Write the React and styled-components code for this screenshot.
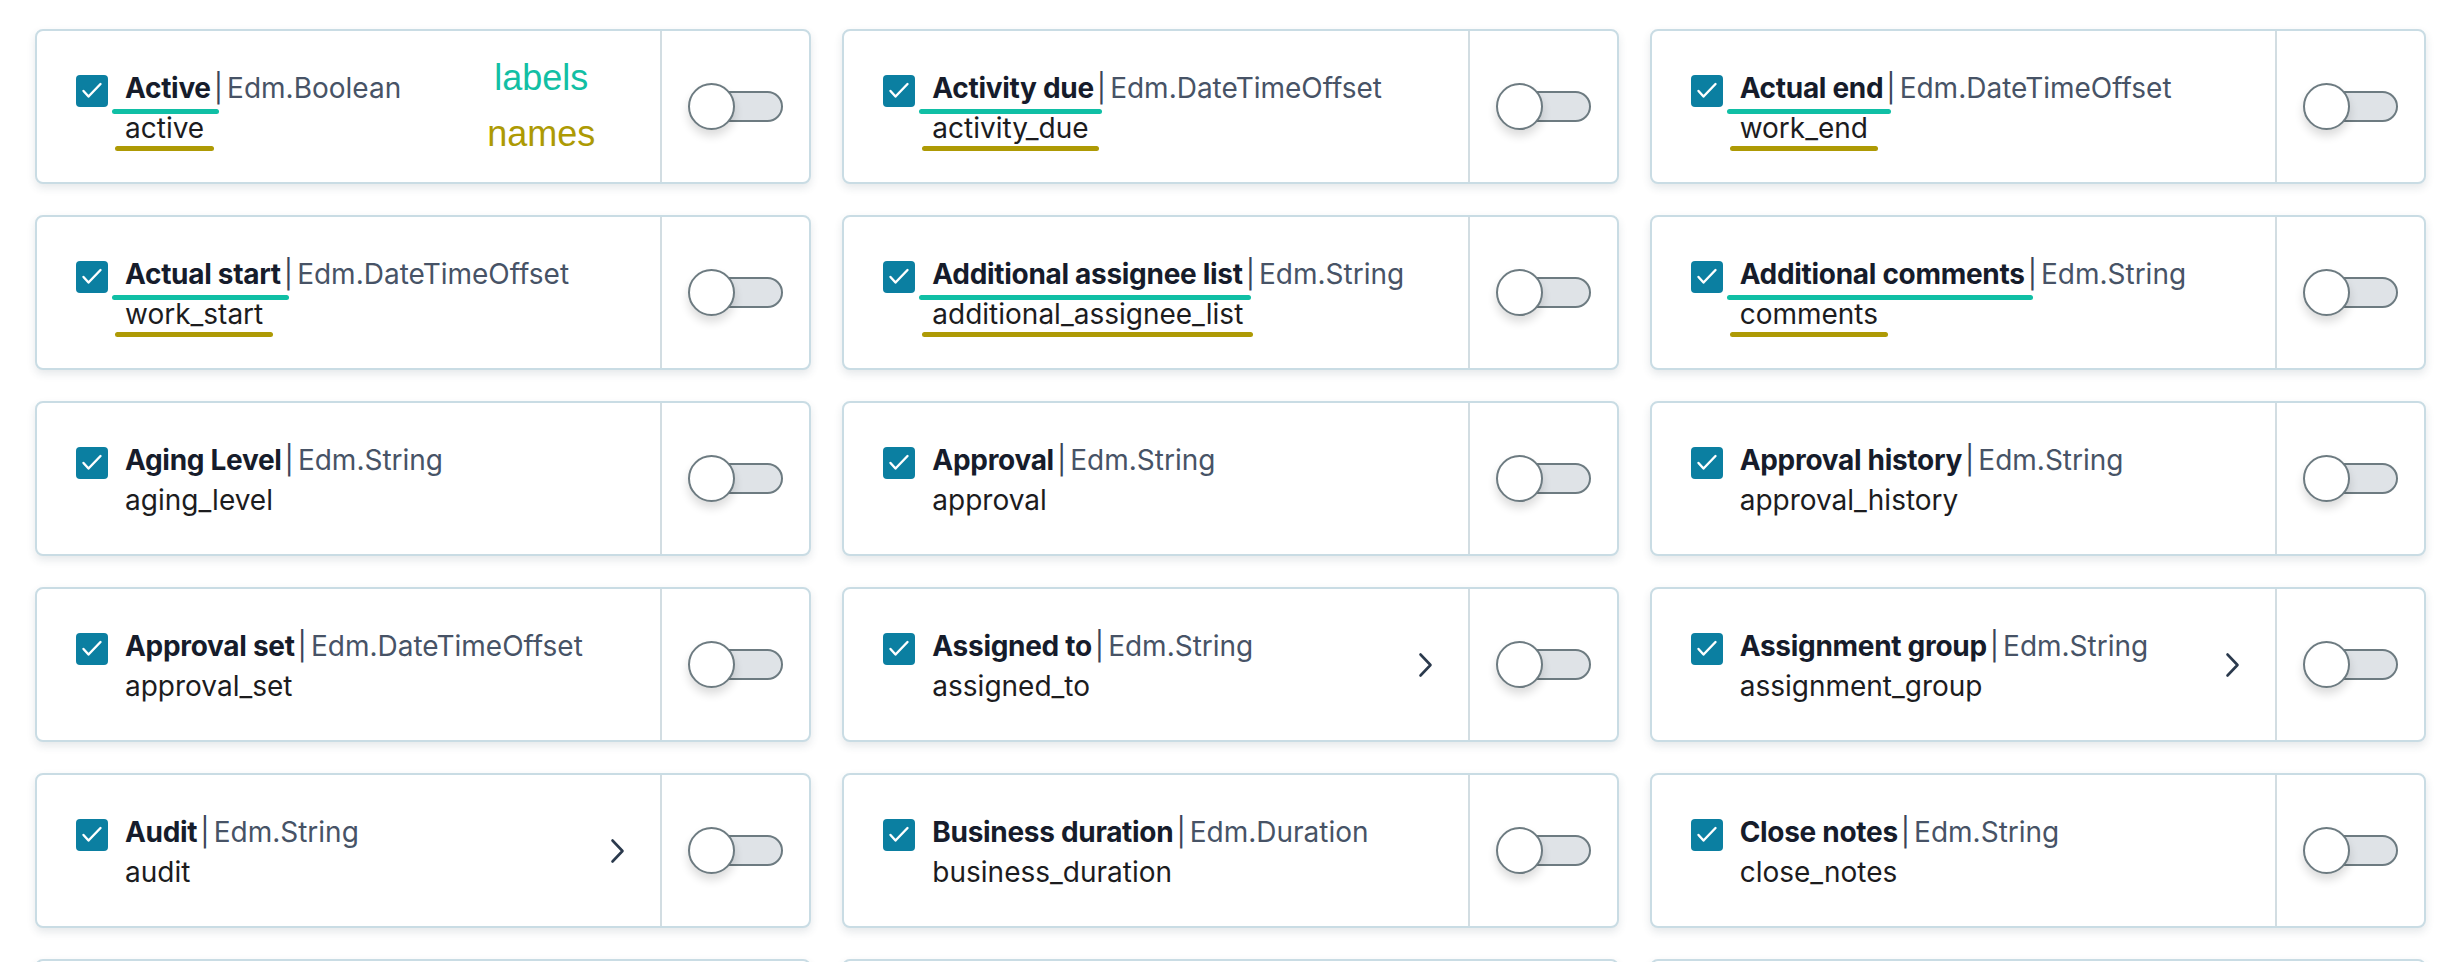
import React from 'react';
import styled, { createGlobalStyle } from 'styled-components';

const GlobalStyle = createGlobalStyle`
  html, body {
    margin: 0;
    padding: 0;
    background: #ffffff;
    overflow: hidden;
  }
  body {
    font-family: Inter, "Noto Sans", sans-serif;
  }
  * {
    box-sizing: border-box;
  }
`;

const Page = styled.div`
  padding: 29px 32px 0 35px;
  height: 962px;
  overflow: hidden;
`;

const Grid = styled.div`
  display: grid;
  grid-template-columns: repeat(3, 1fr);
  column-gap: 31px;
  row-gap: 31px;
`;

const Card = styled.div`
  height: 155px;
  display: flex;
  background: #ffffff;
  border: 2px solid #c9dce4;
  border-radius: 8px;
  box-shadow: 0 4px 8px rgba(40, 64, 84, 0.12);
`;

const Main = styled.div`
  flex: 1;
  min-width: 0;
  display: flex;
  align-items: center;
  padding: 0 35px 0 39px;
`;

const Check = styled.div`
  flex: none;
  width: 32px;
  height: 32px;
  border-radius: 4px;
  background: #0b7fa1;
  align-self: flex-start;
  margin-top: 44px;
  display: flex;
  align-items: center;
  justify-content: center;
`;

const Text = styled.div`
  margin-left: 17px;
  margin-top: 2px;
  font-size: 28px;
  line-height: 40px;
  white-space: nowrap;
`;

const LabelLine = styled.div`
  display: flex;
  align-items: baseline;
`;

const Label = styled.span`
  position: relative;
  font-weight: 700;
  color: #161c2b;
  letter-spacing: -0.3px;

  &::after {
    content: '';
    display: ${p => (p.$marked ? 'block' : 'none')};
    position: absolute;
    left: -13px;
    right: -8px;
    bottom: -6px;
    height: 5px;
    border-radius: 3px;
    background: #10bfa5;
  }
`;

const Pipe = styled.span`
  margin: 0 4px 0 3px;
  color: #3a4558;
`;

const Type = styled.span`
  color: #475366;
`;

const Name = styled.span`
  position: relative;
  display: inline-block;
  line-height: 40px;
  color: #1c1c1e;

  &::after {
    content: '';
    display: ${p => (p.$marked ? 'block' : 'none')};
    position: absolute;
    left: -10px;
    right: -10px;
    bottom: -3px;
    height: 5px;
    border-radius: 3px;
    background: #ae9a05;
  }
`;

const Notes = styled.div`
  margin-left: auto;
  margin-right: 24px;
  width: 120px;
  text-align: center;
  font-family: "Liberation Sans", Arial, sans-serif;
  font-size: 36px;
  line-height: 56px;
  margin-top: -1px;
`;

const Note = styled.div`
  color: ${p => p.$color};
`;

const Chevron = styled.svg`
  flex: none;
  margin-left: auto;
  width: 15px;
  height: 26px;
`;

const Side = styled.div`
  flex: none;
  width: 149px;
  border-left: 2px solid #d2dde2;
  display: flex;
  align-items: center;
  justify-content: center;
`;

const Toggle = styled.div`
  position: relative;
  width: 95px;
  height: 47px;
`;

const Track = styled.div`
  position: absolute;
  left: 12px;
  right: 0;
  top: 8px;
  height: 31px;
  border-radius: 16px;
  border: 2px solid #6d7b81;
  background: #dfe3e7;
`;

const Knob = styled.div`
  position: absolute;
  left: 0;
  top: 0;
  width: 47px;
  height: 47px;
  border-radius: 50%;
  background: #ffffff;
  border: 2px solid #6d7b81;
  box-shadow: 0 6px 10px rgba(0, 0, 0, 0.14);
`;

const fields = [
  { label: 'Active', type: 'Edm.Boolean', name: 'active', marked: true, notes: true },
  { label: 'Activity due', type: 'Edm.DateTimeOffset', name: 'activity_due', marked: true },
  { label: 'Actual end', type: 'Edm.DateTimeOffset', name: 'work_end', marked: true },
  { label: 'Actual start', type: 'Edm.DateTimeOffset', name: 'work_start', marked: true },
  { label: 'Additional assignee list', type: 'Edm.String', name: 'additional_assignee_list', marked: true },
  { label: 'Additional comments', type: 'Edm.String', name: 'comments', marked: true },
  { label: 'Aging Level', type: 'Edm.String', name: 'aging_level' },
  { label: 'Approval', type: 'Edm.String', name: 'approval' },
  { label: 'Approval history', type: 'Edm.String', name: 'approval_history' },
  { label: 'Approval set', type: 'Edm.DateTimeOffset', name: 'approval_set' },
  { label: 'Assigned to', type: 'Edm.String', name: 'assigned_to', nav: true },
  { label: 'Assignment group', type: 'Edm.String', name: 'assignment_group', nav: true },
  { label: 'Audit', type: 'Edm.String', name: 'audit', nav: true },
  { label: 'Business duration', type: 'Edm.Duration', name: 'business_duration' },
  { label: 'Close notes', type: 'Edm.String', name: 'close_notes' },
];

// next row only peeks in at the bottom edge of the screenshot
const peeking = ['closed_at', 'closed_by', 'company'];

const FieldCard = ({ field }) => (
  <Card>
    <Main>
      <Check>
        <svg width="32" height="32" viewBox="0 0 32 32">
          <polyline
            points="7.5,16 12.5,21.5 24.5,9"
            fill="none"
            stroke="#ffffff"
            strokeWidth="2.4"
            strokeLinecap="round"
            strokeLinejoin="round"
          />
        </svg>
      </Check>
      <Text>
        <LabelLine>
          <Label $marked={field.marked}>{field.label}</Label>
          <Pipe>|</Pipe>
          <Type>{field.type}</Type>
        </LabelLine>
        <Name $marked={field.marked}>{field.name}</Name>
      </Text>
      {field.notes && (
        <Notes>
          <Note $color="#12bfa4">labels</Note>
          <Note $color="#ad9a04">names</Note>
        </Notes>
      )}
      {field.nav && (
        <Chevron viewBox="0 0 15 26">
          <polyline
            points="2.5,2.5 12.5,13 2.5,23.5"
            fill="none"
            stroke="#2b3a4d"
            strokeWidth="2.6"
            strokeLinecap="round"
            strokeLinejoin="round"
          />
        </Chevron>
      )}
    </Main>
    <Side>
      <Toggle>
        <Track />
        <Knob />
      </Toggle>
    </Side>
  </Card>
);

export default function App() {
  return (
    <Page>
      <GlobalStyle />
      <Grid>
        {fields.map(f => (
          <FieldCard key={f.name} field={f} />
        ))}
        {peeking.map(key => (
          <Card key={key} />
        ))}
      </Grid>
    </Page>
  );
}
